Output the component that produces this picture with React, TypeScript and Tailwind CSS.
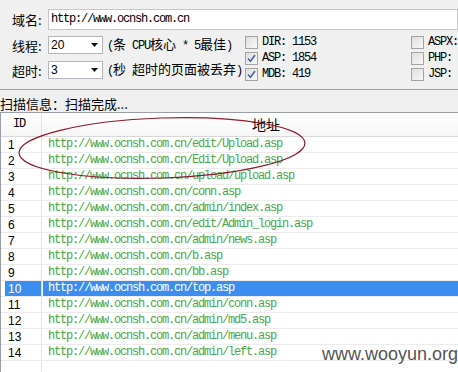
import React from 'react';

const urls = [
  'http://www.ocnsh.com.cn/edit/Upload.asp',
  'http://www.ocnsh.com.cn/Edit/Upload.asp',
  'http://www.ocnsh.com.cn/upload/upload.asp',
  'http://www.ocnsh.com.cn/conn.asp',
  'http://www.ocnsh.com.cn/admin/index.asp',
  'http://www.ocnsh.com.cn/edit/Admin_login.asp',
  'http://www.ocnsh.com.cn/admin/news.asp',
  'http://www.ocnsh.com.cn/b.asp',
  'http://www.ocnsh.com.cn/bb.asp',
  'http://www.ocnsh.com.cn/top.asp',
  'http://www.ocnsh.com.cn/admin/conn.asp',
  'http://www.ocnsh.com.cn/admin/md5.asp',
  'http://www.ocnsh.com.cn/admin/menu.asp',
  'http://www.ocnsh.com.cn/admin/left.asp',
];

const SELECTED = 10;

function Cn({ children, className = '' }: { children: React.ReactNode; className?: string }) {
  return (
    <span className={`font-['Noto_Sans_CJK_SC',sans-serif] text-[13px] leading-[15px] ${className}`}>
      {children}
    </span>
  );
}

// SimSun-ish latin: 6px per char
function Mono({ children, className = '' }: { children: React.ReactNode; className?: string }) {
  return (
    <span className={`font-['Liberation_Mono',monospace] text-[12px] leading-[15px] tracking-[-1.2px] whitespace-pre ${className}`}>
      {children}
    </span>
  );
}

function Combo({ value }: { value: string }) {
  return (
    <div className="flex h-[18px] w-[55px] items-center justify-between border border-[#b4b7bd] bg-white pl-[2px] pr-[4px]">
      <span className="font-['Liberation_Sans',sans-serif] text-[12px] leading-[14px] text-black">{value}</span>
      <svg width="7" height="4" viewBox="0 0 7 4">
        <path d="M0 0h7L3.5 4z" fill="#111" />
      </svg>
    </div>
  );
}

function Check({ checked, label }: { checked: boolean; label: string }) {
  return (
    <div className="flex h-[16px] items-center gap-[4px]">
      <div className="flex h-[13px] w-[13px] items-center justify-center border border-[#a3a3a3] bg-gradient-to-br from-[#dedede] to-[#f9f9f9]">
        {checked && (
          <svg width="9" height="9" viewBox="0 0 9 9">
            <path d="M1 4.5l2.5 2.8L8 1" fill="none" stroke="#4b63a8" strokeWidth="1.6" />
          </svg>
        )}
      </div>
      <Mono className="text-black">{label}</Mono>
    </div>
  );
}

export default function App() {
  return (
    <div className="relative h-[372px] w-[458px] overflow-hidden bg-white">
      <div className="h-[90px] border-b border-[#a0a0a0] bg-[#f0f0f0] pt-[9px]">
        <div className="flex items-center">
          <Cn className="w-[48px] pl-[12px] text-black">域名:</Cn>
          <div className="flex h-[21px] flex-1 items-center border border-[#c4c6ca] bg-white pl-[2px]">
            <Mono className="text-black">http://www.ocnsh.com.cn</Mono>
          </div>
        </div>
        <div className="mt-[4px] flex h-[48px]">
          <div className="flex w-[245px] flex-col gap-[7px] pt-[2px]">
            <div className="flex items-center">
              <Cn className="w-[48px] pl-[12px] text-black">线程:</Cn>
              <Combo value="20" />
              <span className="ml-[4px] flex items-baseline text-black">
                <Mono>(</Mono>
                <Cn>条</Cn>
                <Mono> CPU</Mono>
                <Cn>核心</Cn>
                <Mono> * 5</Mono>
                <Cn>最佳</Cn>
                <Mono>)</Mono>
              </span>
            </div>
            <div className="flex items-center">
              <Cn className="w-[48px] pl-[12px] text-black">超时:</Cn>
              <Combo value="3" />
              <span className="ml-[4px] flex items-baseline text-black">
                <Mono>(</Mono>
                <Cn>秒</Cn>
                <Mono> </Mono>
                <Cn>超时的页面被丢弃</Cn>
                <Mono>)</Mono>
              </span>
            </div>
          </div>
          <div className="flex w-[166px] flex-col">
            <Check checked={false} label="DIR: 1153" />
            <Check checked label="ASP: 1854" />
            <Check checked label="MDB: 419" />
          </div>
          <div className="flex flex-col">
            <Check checked={false} label="ASPX:" />
            <Check checked={false} label="PHP:" />
            <Check checked={false} label="JSP:" />
          </div>
        </div>
      </div>

      <div className="flex h-[22px] items-end bg-[#f0f0f0] pb-[1px]">
        <Cn className="text-black">扫描信息：扫描完成...</Cn>
      </div>

      <div className="h-[260px] border-t border-l border-[#9a9ea6] bg-white">
        <div className="flex h-[24px] border-b border-[#d8d8d8] bg-gradient-to-b from-white to-[#f6f6f6]">
          <div className="flex w-[41px] items-center border-r border-[#e2e2e2] pl-[12px]">
            <Mono className="text-black">ID</Mono>
          </div>
          <div className="flex flex-1 items-center pl-[210px]">
            <Cn className="text-[14px] text-black">地址</Cn>
          </div>
        </div>
        {urls.map((url, i) => {
          const id = i + 1;
          const sel = id === SELECTED;
          return (
            <div key={id} className="flex h-[16px] border-b border-[#ececec]">
              <div className="w-[41px] border-r border-[#e2e2e2] pl-[4px]">
                <div className={`flex h-full items-center pl-[3px] ${sel ? 'bg-[#3b8eef]' : ''}`}>
                  <span
                    className={`font-['Liberation_Sans',sans-serif] text-[12px] leading-[14px] ${sel ? 'text-white' : 'text-black'}`}
                  >
                    {id}
                  </span>
                </div>
              </div>
              <div className={`ml-px flex flex-1 items-center pl-[5px] ${sel ? 'bg-[#3b8eef]' : ''}`}>
                <Mono className={sel ? 'text-white' : 'text-[#4aa64a]'}>{url}</Mono>
              </div>
            </div>
          );
        })}
        <div className="flex h-full">
          <div className="w-[41px] border-r border-[#e2e2e2]" />
        </div>
      </div>

      <svg className="pointer-events-none absolute left-0 top-0" width="458" height="372">
        <ellipse
          cx="162"
          cy="148"
          rx="143"
          ry="30"
          fill="none"
          stroke="#8a1c2c"
          strokeWidth="1.2"
          transform="rotate(-2 162 148)"
        />
      </svg>

      <div className="absolute right-0 top-[343px] font-['Liberation_Sans',sans-serif] text-[18px] leading-[22px] text-[#555]">
        www.wooyun.org
      </div>
    </div>
  );
}
